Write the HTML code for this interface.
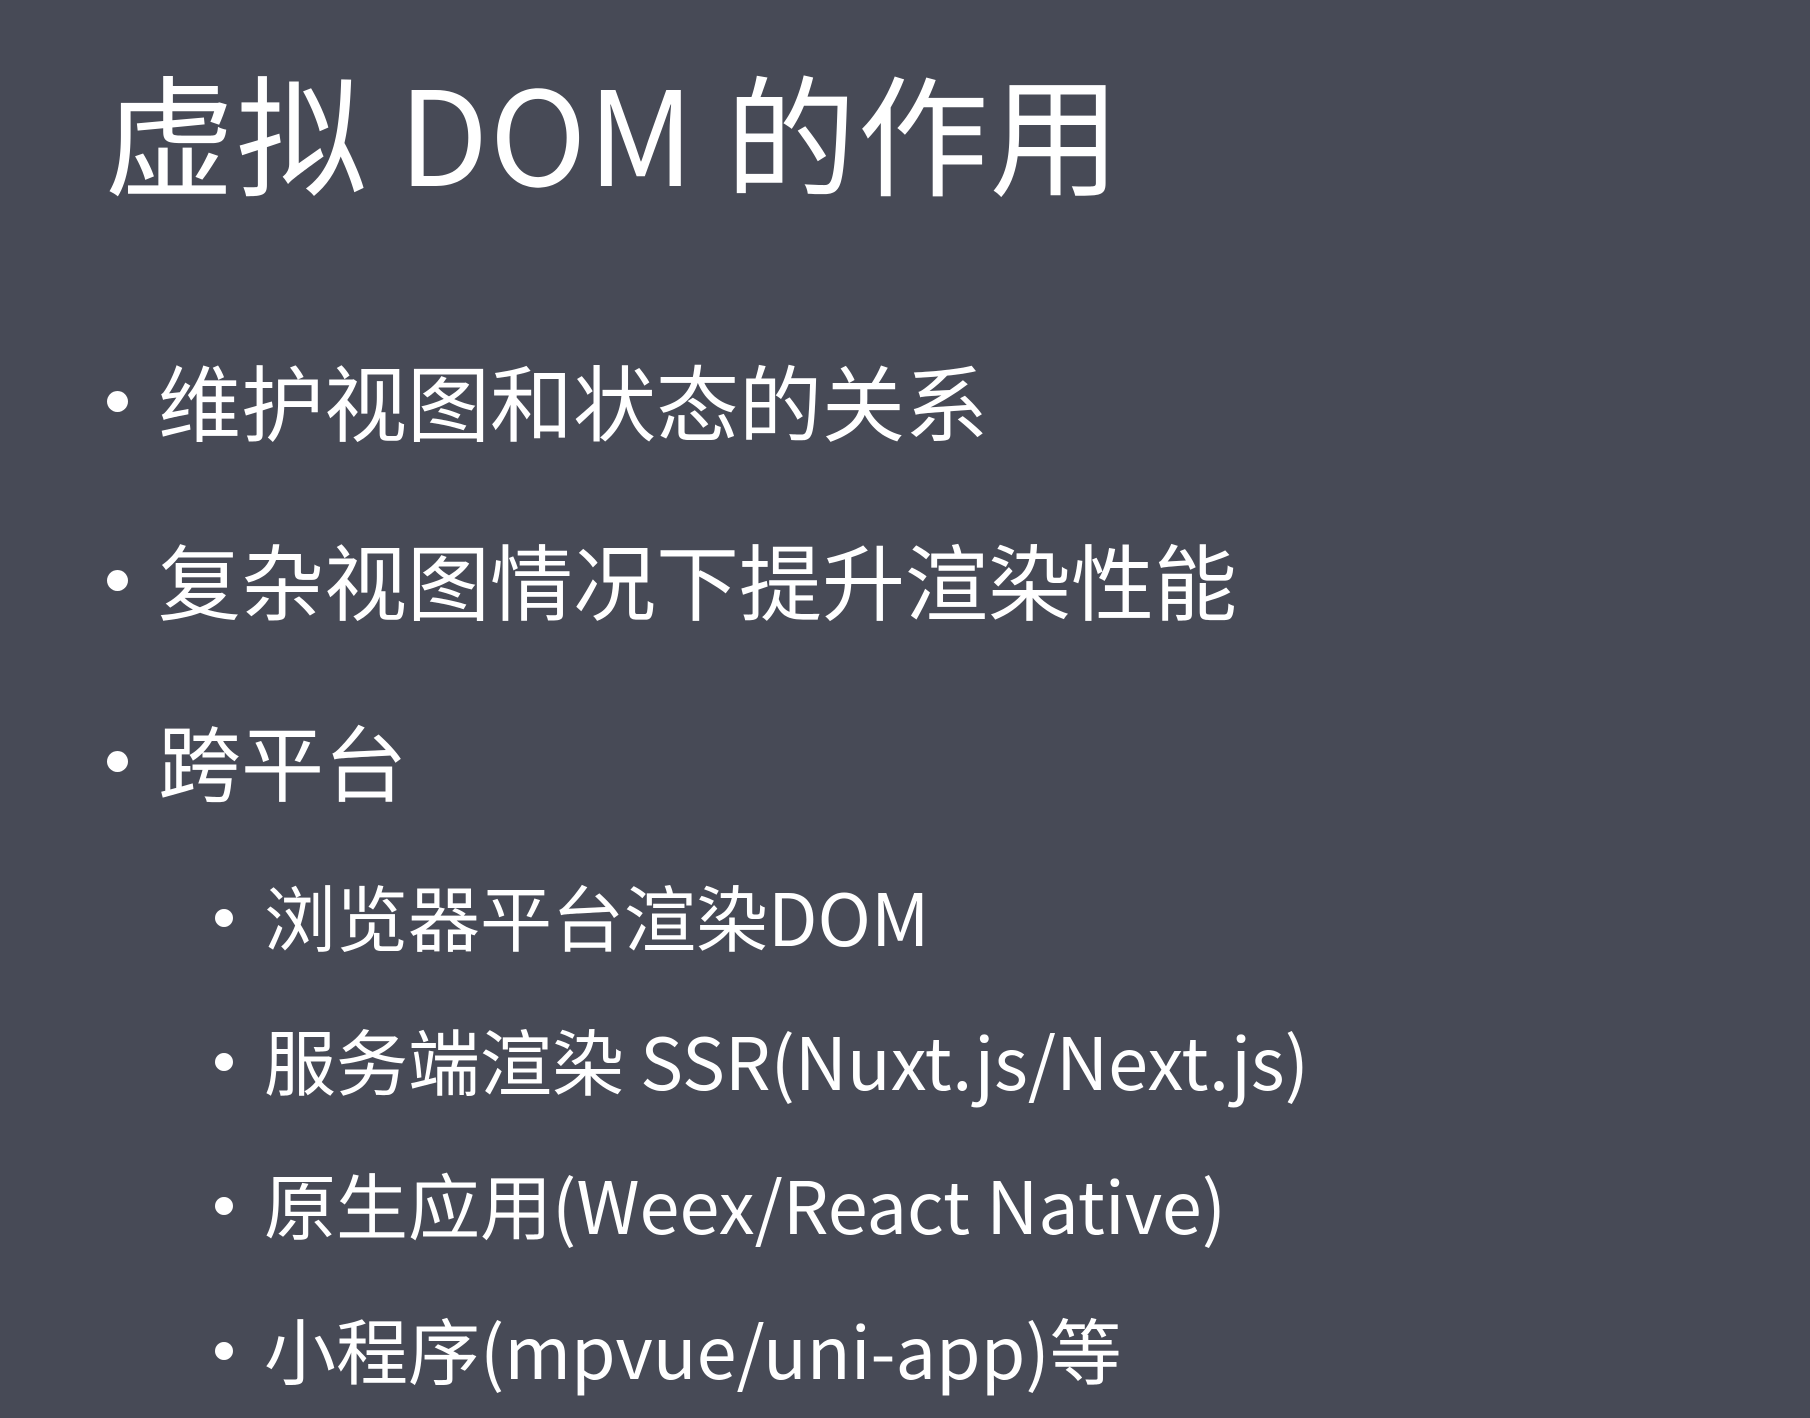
<!DOCTYPE html>
<html><head><meta charset="utf-8"><style>
html,body{margin:0;padding:0;}
body{width:1810px;height:1418px;background:#474a56;position:relative;overflow:hidden;color:#fff;font-family:"Noto Sans CJK SC","Liberation Sans",sans-serif;}
.t{position:absolute;white-space:nowrap;line-height:1;}
.d{position:absolute;border-radius:50%;background:#fff;}
</style></head><body>
<div class="t" style="left:104px;top:64px;font-size:131px;letter-spacing:1px;">虚拟 DOM 的作用</div>

<div class="d" style="left:107px;top:391px;width:21px;height:21px;"></div>
<div class="t" style="left:158px;top:358px;font-size:83px;">维护视图和状态的关系</div>
<div class="d" style="left:107px;top:570px;width:21px;height:21px;"></div>
<div class="t" style="left:158px;top:537px;font-size:83px;">复杂视图情况下提升渲染性能</div>
<div class="d" style="left:107px;top:751px;width:21px;height:21px;"></div>
<div class="t" style="left:158px;top:718px;font-size:83px;">跨平台</div>

<div class="d" style="left:215px;top:909px;width:18px;height:18px;"></div>
<div class="t" style="left:264px;top:879px;font-size:72px;">浏览器平台渲染DOM</div>
<div class="d" style="left:215px;top:1053px;width:18px;height:18px;"></div>
<div class="t" style="left:264px;top:1023px;font-size:72px;">服务端渲染 SSR(Nuxt.js/Next.js)</div>
<div class="d" style="left:215px;top:1197px;width:18px;height:18px;"></div>
<div class="t" style="left:264px;top:1167px;font-size:72px;">原生应用(Weex/React Native)</div>
<div class="d" style="left:215px;top:1342px;width:18px;height:18px;"></div>
<div class="t" style="left:264px;top:1312px;font-size:72px;">小程序(mpvue/uni-app)等</div>
</body></html>
